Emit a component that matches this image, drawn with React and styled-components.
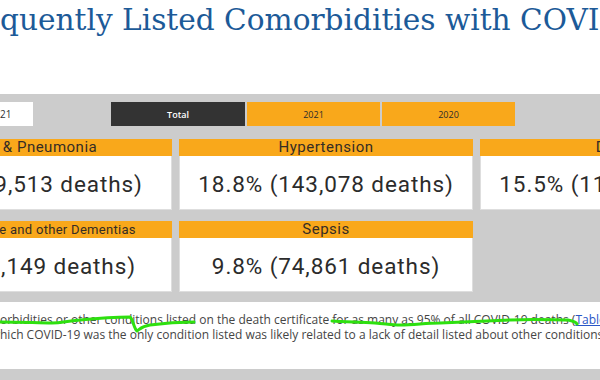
import React from "react";
import styled, { createGlobalStyle } from "styled-components";

const Global = createGlobalStyle`
  html, body { margin: 0; padding: 0; background: #ffffff; }
  #root { width: 600px; height: 380px; overflow: hidden; }
`;

const Page = styled.div`
  width: 600px;
  height: 380px;
  overflow: hidden;
  display: flex;
  flex-direction: column;
  background: #cccccc;
`;

const TitleBar = styled.header`
  height: 94px;
  flex: none;
  background: #ffffff;
  padding-top: 2px;
  box-sizing: border-box;
`;

const Title = styled.h1`
  margin: 0;
  font-family: "DejaVu Serif", "Liberation Serif", serif;
  font-weight: normal;
  font-size: 29.6px;
  line-height: 36px;
  color: #1c5a98;
  white-space: nowrap;
`;

/* part of a line that lies left of the crop: it ends exactly at the left edge */
const Cut = styled.span`
  display: inline-flex;
  justify-content: flex-end;
  width: 0;
  white-space: nowrap;
`;

const Board = styled.section`
  flex: none;
  padding: 8px 0 10px;
  display: flex;
  flex-direction: column;
  gap: 13px;
`;

const SlicerRow = styled.div`
  display: flex;
  align-items: stretch;
  height: 24px;
`;

const Dropdown = styled.div`
  width: 33px;
  background: #ffffff;
  display: flex;
  align-items: center;
  font-family: "Open Sans", "Noto Sans", sans-serif;
  font-size: 10px;
  color: #333333;
  white-space: nowrap;
  margin-right: 78px;
`;

const Buttons = styled.div`
  display: flex;
  gap: 2px;
`;

const YearButton = styled.button`
  width: ${(p) => p.$w}px;
  border: none;
  margin: 0;
  padding: 0;
  background: ${(p) => (p.$active ? "#333333" : "#f9a81b")};
  color: ${(p) => (p.$active ? "#ffffff" : "#2b2b2b")};
  font-family: "Open Sans", "Noto Sans", sans-serif;
  font-size: 9px;
  font-weight: ${(p) => (p.$active ? 600 : 400)};
`;

const CardGrid = styled.div`
  display: grid;
  grid-template-columns: 314px 294px 294px;
  grid-auto-rows: 71px;
  column-gap: 7px;
  row-gap: 11px;
  margin-left: -142px;
`;

const Card = styled.div`
  display: flex;
  flex-direction: column;
`;

const CardHead = styled.div`
  height: 17px;
  flex: none;
  background: #f9a81b;
  color: #352d25;
  font-family: Roboto, "Open Sans", sans-serif;
  font-size: ${(p) => (p.$small ? 13 : 15)}px;
  letter-spacing: ${(p) => (p.$small ? 0.3 : 0.5)}px;
  line-height: 17px;
  text-align: center;
  white-space: nowrap;
`;

const CardBody = styled.div`
  flex: 1;
  background: #ffffff;
  border: 1px solid #dedede;
  border-top: none;
  display: flex;
  align-items: center;
  justify-content: center;
  font-family: Roboto, "Open Sans", sans-serif;
  font-size: 22.5px;
  letter-spacing: 0.9px;
  color: #2b2b2b;
  white-space: nowrap;
  padding-top: 2px;
`;

const Notes = styled.div`
  position: relative;
  height: 67px;
  flex: none;
  background: #ffffff;
  padding-top: 10px;
  box-sizing: border-box;
  font-family: "Open Sans", "Noto Sans", sans-serif;
  font-size: 12px;
  line-height: 15px;
  color: #454545;
`;

const Line = styled.p`
  margin: 0;
  white-space: nowrap;
`;

const Link = styled.a`
  color: #2a56c6;
  text-decoration: underline;
`;

const Scribble = styled.svg`
  position: absolute;
  left: 0;
  top: 0;
  pointer-events: none;
`;

const row1 = [
  { head: "Influenza & Pneumonia", value: "22.3% (169,513 deaths)" },
  { head: "Hypertension", value: "18.8% (143,078 deaths)" },
  { head: "Diabetes", value: "15.5% (118,276 deaths)" },
];

const row2 = [
  { head: "Alzheimer Disease and other Dementias", value: "10.4% (79,149 deaths)", small: true },
  { head: "Sepsis", value: "9.8% (74,861 deaths)" },
];

export default function App() {
  return (
    <>
      <Global />
      <Page>
        <TitleBar>
          <Title>
            <Cut>Most Fre</Cut>quently Listed Comorbidities with COVID-19 Deaths
          </Title>
        </TitleBar>
        <Board>
          <SlicerRow>
            <Dropdown>
              <Cut>2020 - 20</Cut>21
            </Dropdown>
            <Buttons>
              <YearButton $w={134} $active>Total</YearButton>
              <YearButton $w={133}>2021</YearButton>
              <YearButton $w={133}>2020</YearButton>
            </Buttons>
          </SlicerRow>
          <CardGrid>
            {row1.concat(row2).map((c) => (
              <Card key={c.head}>
                <CardHead $small={c.small}>{c.head}</CardHead>
                <CardBody>{c.value}</CardBody>
              </Card>
            ))}
          </CardGrid>
        </Board>
        <Notes>
          <Line>
            <Cut>Data show that, for deaths involving COVID-19, there were one or more com</Cut>
            orbidities or other conditions listed on the death certificate for as many as 95% of all
            COVID-19 deaths (<Link>Table 3</Link>).
          </Line>
          <Line>
            <Cut>The small proportion of deaths for w</Cut>hich COVID-19 was the only condition listed
            was likely related to a lack of detail listed about other conditions.
          </Line>
          <Scribble width="600" height="67" viewBox="0 0 600 67">
            <path
              d="M0 20 C20 20 40 21 52 21 C62 21 66 19 80 18 C100 16 118 15 130 15 C133 17 134 27 137 29 C140 27 142 24 150 23 C165 21 180 20 194 20"
              fill="none"
              stroke="#2ee00f"
              strokeWidth="3"
              strokeLinecap="round"
              strokeLinejoin="round"
            />
            <path
              d="M332 19 C345 20 360 20 375 21 C387 22 393 23 400 23 C415 23 425 21 440 21 C465 20 485 19 510 18 C535 17 555 18 568 18 C573 19 576 20 577 22"
              fill="none"
              stroke="#2ee00f"
              strokeWidth="3"
              strokeLinecap="round"
              strokeLinejoin="round"
            />
          </Scribble>
        </Notes>
      </Page>
    </>
  );
}
